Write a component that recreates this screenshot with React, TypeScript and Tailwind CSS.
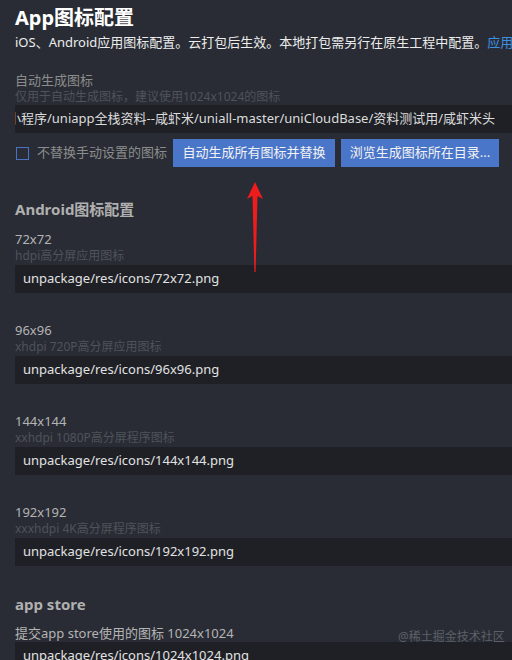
export default function App() {
  const fields = [
    { size: "72x72", hint: "hdpi高分屏应用图标" },
    { size: "96x96", hint: "xhdpi 720P高分屏应用图标" },
    { size: "144x144", hint: "xxhdpi 1080P高分屏程序图标" },
    { size: "192x192", hint: "xxxhdpi 4K高分屏程序图标" },
  ]

  return (
    <div
      className="relative w-[512px] h-[660px] overflow-hidden bg-[#292c34] pl-[15px] pt-[6px] text-[13px]"
      style={{ fontFamily: '"Noto Sans", "Noto Sans CJK SC", sans-serif' }}
    >
      {/* Header */}
      <h1 className="text-[20px] leading-[24px] font-bold text-white">App图标配置</h1>
      <p className="mt-[2px] leading-[20px] whitespace-nowrap text-[#ececec]">
        iOS、Android应用图标配置。云打包后生效。本地打包需另行在原生工程中配置。
        <span className="text-[#3d8fe0]">应用</span>
      </p>

      {/* Auto generate */}
      <div className="mt-[19px] leading-[18px] text-[#8c8c8c]">自动生成图标</div>
      <div className="text-[12px] leading-[16px] text-[#4f535a]">仅用于自动生成图标，建议使用1024x1024的图标</div>
      <div className="h-[28px] flex items-center overflow-hidden bg-[#1e2026] text-[#dcdcdc] whitespace-nowrap">
        <span className="-ml-[7px]">小程序/uniapp全栈资料--咸虾米/uniall-master/uniCloudBase/资料测试用/咸虾米头</span>
      </div>
      <div className="mt-[6px] flex items-center h-[28px] whitespace-nowrap">
        <span className="ml-[1px] w-[13px] h-[13px] border border-[#4a72c4]"></span>
        <span className="ml-[8px] text-[#8c8c8c]">不替换手动设置的图标</span>
        <button className="ml-[6px] h-[28px] w-[162px] bg-[#4a76c9] text-[#f2f2f2]">自动生成所有图标并替换</button>
        <button className="ml-[6px] h-[28px] w-[158px] bg-[#4a76c9] text-[#f2f2f2]">浏览生成图标所在目录...</button>
      </div>

      {/* Android */}
      <h2 className="mt-[32px] text-[15px] leading-[20px] font-bold text-[#b0b0b0]">Android图标配置</h2>
      <div className="mt-[11px]">
        {fields.map((f) => (
          <div key={f.size} className="mb-[28px]">
            <div className="leading-[18px] text-[#b4b4b4]">{f.size}</div>
            <div className="text-[12px] leading-[16px] text-[#4f535a]">{f.hint}</div>
            <div className="mt-[1px] h-[28px] flex items-center pl-[8px] bg-[#1e2026] text-[#e2e2e2]">
              unpackage/res/icons/{f.size}.png
            </div>
          </div>
        ))}
      </div>

      {/* App store */}
      <h2 className="mt-[4px] text-[15px] leading-[20px] font-bold text-[#b0b0b0]">app store</h2>
      <div className="mt-[10px] leading-[18px] text-[#b4b4b4]">提交app store使用的图标 1024x1024</div>
      <div className="h-[28px] flex items-center pl-[8px] bg-[#1e2026] text-[#e2e2e2]">
        unpackage/res/icons/1024x1024.png
      </div>

      {/* Watermark */}
      <div className="absolute left-[398px] top-[628px] text-[12px] leading-[17px] text-[#5c6068]">@稀土掘金技术社区</div>

      {/* Red arrow */}
      <svg className="absolute left-[244px] top-[182px]" width="22" height="92" viewBox="0 0 22 92">
        <path d="M11 0 L19 17 L13.5 14 L11.6 90 L10.4 90 L8.5 14 L3 17 Z" fill="#ee1c1c" />
      </svg>
    </div>
  )
}
